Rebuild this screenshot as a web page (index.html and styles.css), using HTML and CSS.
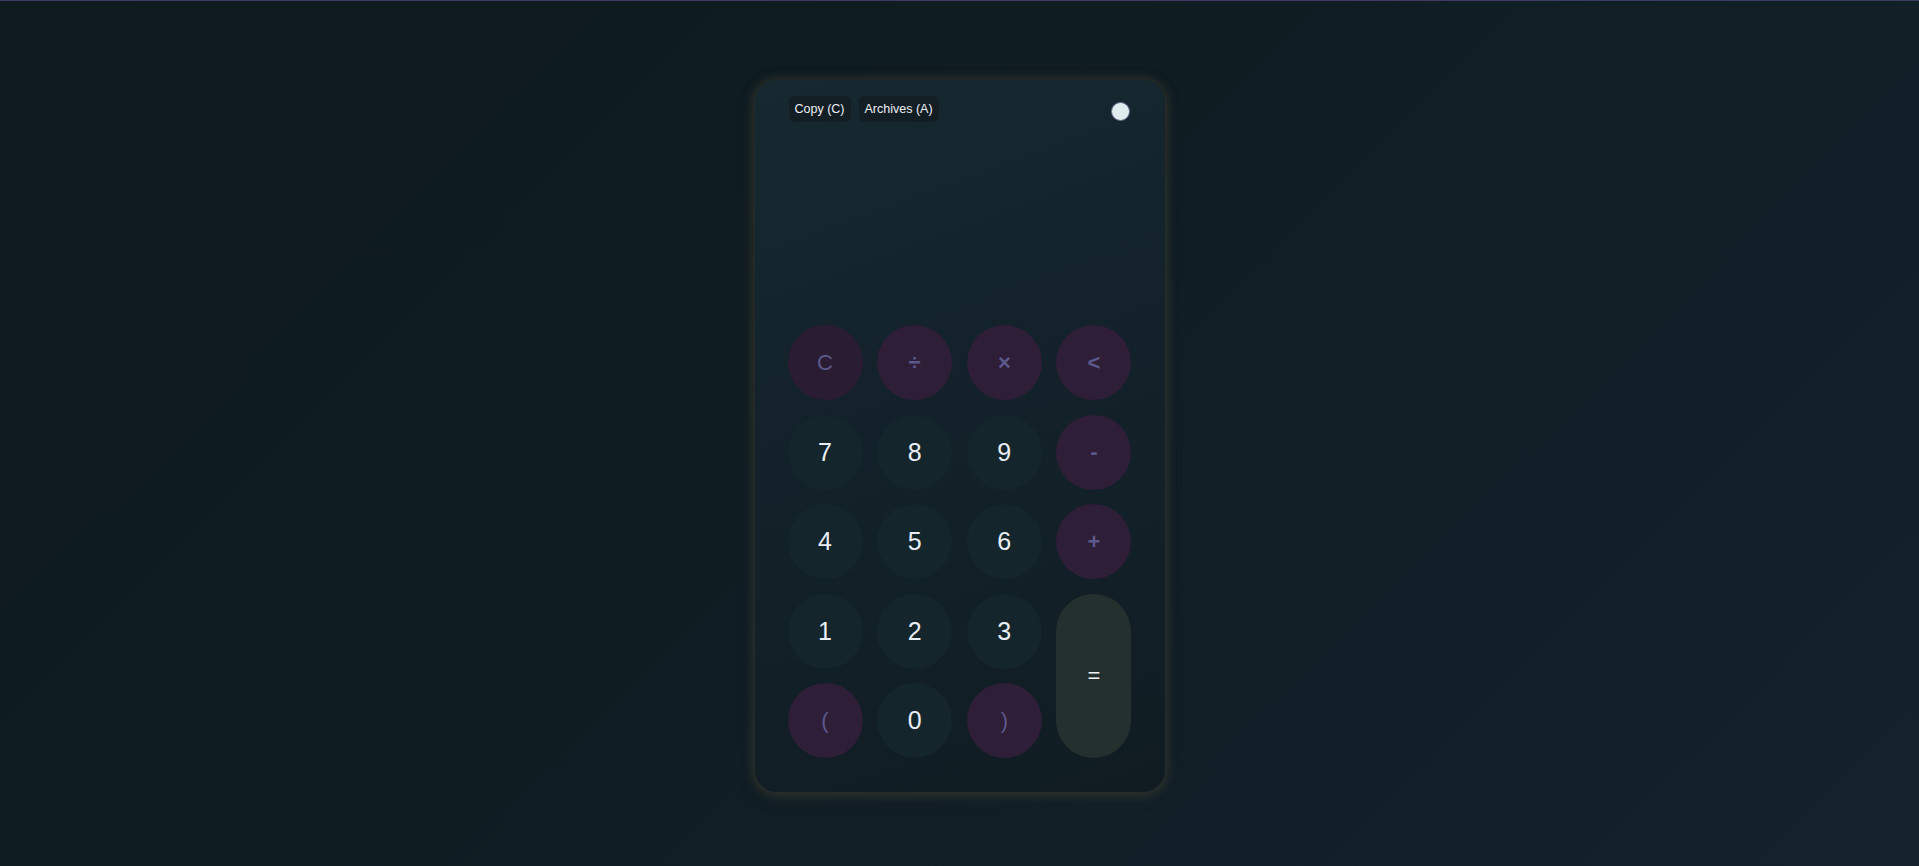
FILE: index.html
```html
<!DOCTYPE html>
<html lang="en">
<head>
<meta charset="utf-8">
<title>Calculator</title>
<link rel="stylesheet" href="styles.css">
</head>
<body>
<main class="page">
  <section class="calc">
    <header class="calc-top">
      <div class="calc-actions">
        <button class="chip">Copy (C)</button>
        <button class="chip">Archives (A)</button>
      </div>
      <button class="theme-dot" aria-label="Theme"></button>
    </header>
    <div class="display"></div>
    <div class="keys">
      <button class="key op clear">C</button>
      <button class="key op sign">÷</button>
      <button class="key op sign">×</button>
      <button class="key op sign">&lt;</button>

      <button class="key num">7</button>
      <button class="key num">8</button>
      <button class="key num">9</button>
      <button class="key op sign">-</button>

      <button class="key num">4</button>
      <button class="key num">5</button>
      <button class="key num">6</button>
      <button class="key op sign">+</button>

      <button class="key num">1</button>
      <button class="key num">2</button>
      <button class="key num">3</button>
      <button class="key equals">=</button>

      <button class="key op">(</button>
      <button class="key num">0</button>
      <button class="key op">)</button>
    </div>
  </section>
</main>
</body>
</html>
```
FILE: styles.css
```css
html, body {
  margin: 0;
  padding: 0;
  height: 100%;
}

body {
  background: linear-gradient(135deg, #0e1a20 0%, #0f1c22 40%, #112028 75%, #14232b 100%);
  border-top: 1px solid #3e3a62;
  box-sizing: border-box;
  font-family: "Liberation Sans", Arial, sans-serif;
  overflow: hidden;
}

.page {
  display: flex;
  justify-content: center;
  padding-top: 79px;
}

.calc {
  width: 410px;
  height: 712px;
  box-sizing: border-box;
  padding: 16px 33px 34px 33px;
  border-radius: 22px;
  background: linear-gradient(160deg, #172830 0%, #13222a 45%, #101c22 100%);
  box-shadow:
    0 0 10px 2px rgba(66, 62, 48, 0.5),
    0 4px 14px 2px rgba(56, 54, 44, 0.4);
  display: flex;
  flex-direction: column;
}

.calc-top {
  display: flex;
  align-items: center;
  justify-content: space-between;
  height: 26px;
}

.calc-actions {
  display: flex;
  gap: 8px;
  margin-left: 1px;
}

.chip {
  height: 26px;
  padding: 0 6px;
  border: none;
  border-radius: 6px;
  background: #121e24;
  color: #eef0f6;
  font-family: "Liberation Sans", Arial, sans-serif;
  font-size: 12.5px;
  cursor: pointer;
}

.theme-dot {
  width: 19px;
  height: 19px;
  margin-top: 4px;
  margin-right: 2px;
  padding: 0;
  border: 1px solid #6b6a93;
  border-radius: 50%;
  background: #dfeced;
  cursor: pointer;
}

.display {
  flex: 1;
}

.keys {
  display: grid;
  grid-template-columns: repeat(4, 75px);
  grid-auto-rows: 75px;
  justify-content: space-between;
  row-gap: 14.5px;
}

.key {
  width: 75px;
  height: 75px;
  padding: 0;
  border: none;
  border-radius: 50%;
  font-family: "Liberation Sans", Arial, sans-serif;
  cursor: pointer;
  display: flex;
  align-items: center;
  justify-content: center;
}

.num {
  background: #15252c;
  color: #e9eef6;
  font-size: 25px;
}

.op {
  background: #2e1e37;
  color: #5c588c;
  font-size: 22px;
}

.sign {
  font-weight: bold;
}

.clear {
  background: #2a1c32;
}

.equals {
  grid-column: 4;
  grid-row: 4 / span 2;
  height: auto;
  border-radius: 38px;
  background: #24302d;
  color: #eef1f4;
  font-size: 22px;
}
```
